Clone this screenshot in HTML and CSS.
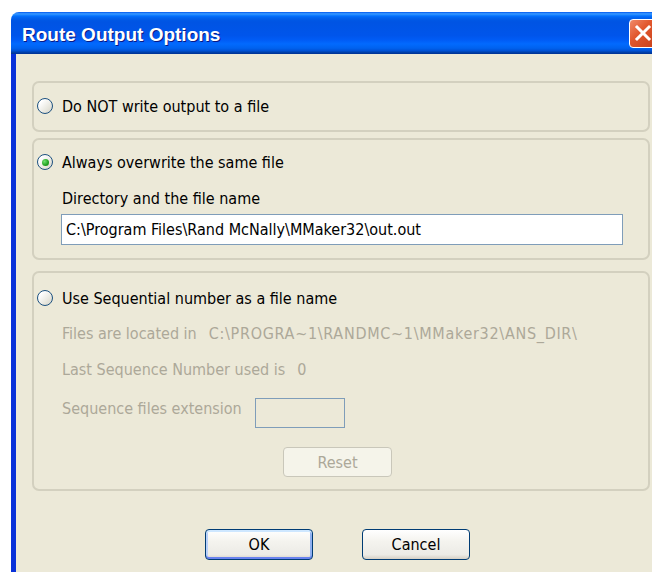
FILE: index.html
```html
<!DOCTYPE html>
<html lang="en">
<head>
<meta charset="utf-8">
<title>Route Output Options</title>
<link rel="stylesheet" href="styles.css">
</head>
<body>
<div class="window">
  <div class="titlebar">
    <span class="title">Route Output Options</span>
    <span class="close">
      <svg width="18" height="18" viewBox="0 0 18 18">
        <path d="M3 3 L15 15 M15 3 L3 15" stroke="#fff" stroke-width="3" stroke-linecap="square"/>
      </svg>
    </span>
  </div>
  <div class="frame">
    <div class="client">
      <div class="group g1">
        <div class="radio-row"><span class="radio"></span><span>Do NOT write output to a file</span></div>
      </div>

      <div class="group g2">
        <div class="radio-row"><span class="radio checked"></span><span>Always overwrite the same file</span></div>
        <div class="label">Directory and the file name</div>
        <input class="field" type="text" value="C:\Program Files\Rand McNally\MMaker32\out.out" readonly>
      </div>

      <div class="group g3">
        <div class="radio-row"><span class="radio"></span><span>Use Sequential number as a file name</span></div>
        <div class="sub"><span>Files are located in</span><span class="path">C:\PROGRA~1\RANDMC~1\MMaker32\ANS_DIR\</span></div>
        <div class="sub"><span>Last Sequence Number used is</span><span>0</span></div>
        <div class="sub ext-row"><span class="ext-label">Sequence files extension</span><input class="ext" type="text" disabled></div>
        <button class="btn reset" type="button" disabled>Reset</button>
      </div>

      <div class="actions">
        <button class="btn default" type="button">OK</button>
        <button class="btn" type="button">Cancel</button>
      </div>
    </div>
  </div>
</div>
</body>
</html>
```

FILE: styles.css
```css
body {
  margin: 0;
  width: 652px;
  height: 572px;
  overflow: hidden;
  background: #ffffff;
  font-family: "DejaVu Sans Condensed", "DejaVu Sans", sans-serif;
  font-stretch: condensed;
  font-size: 16px;
  color: #000000;
}

.window {
  margin: 12px 0 0 11px;
  width: 660px;
}

/* Luna-style caption bar */
.titlebar {
  height: 42px;
  display: flex;
  align-items: center;
  padding-left: 11px;
  border-radius: 8px 8px 0 0;
  background: linear-gradient(to bottom,
    #0058ee 0%, #3593ff 4%, #288eff 6%, #127dff 8%, #036ffc 10%,
    #0262ee 14%, #0057e5 20%, #0054e3 24%, #0055eb 56%, #005bf5 66%,
    #026afe 76%, #0062ef 86%, #0052d6 92%, #0040ab 96%, #003092 100%);
}

.title {
  font-family: "Liberation Sans", Arial, sans-serif;
  font-weight: bold;
  font-size: 19px;
  color: #ffffff;
  text-shadow: 1px 1px 0 #0a1883;
  padding-top: 3px;
}

.close {
  margin-left: auto;
  margin-right: 14px;
  width: 28px;
  height: 29px;
  box-sizing: border-box;
  border: 1px solid #ffffff;
  border-radius: 4px;
  background: linear-gradient(135deg, #f08a6a 0%, #e2582f 40%, #c8401a 100%);
  display: flex;
  align-items: center;
  justify-content: center;
}

.frame {
  padding-left: 5px;
  background: linear-gradient(to right, #0831d9 0%, #1a64ee 40%, #0a55e5 100%);
}

.client {
  background: #ece9d8;
  padding: 27px 21px 40px 16px;
}

/* Group frames */
.group {
  width: 618px;
  box-sizing: border-box;
  border: 2px solid #d3d0bf;
  border-radius: 7px;
  padding-left: 3px;
}

.g1 {
  padding-top: 13px;
  padding-bottom: 14px;
}

.g2 {
  margin-top: 6px;
  padding-top: 12px;
  padding-bottom: 13px;
}

.g3 {
  margin-top: 11px;
  padding-top: 15px;
  padding-bottom: 12px;
}

.radio-row {
  height: 20px;
  display: flex;
  align-items: center;
  gap: 9px;
}

.radio {
  width: 16px;
  height: 16px;
  box-sizing: border-box;
  border: 1px solid #1c5180;
  border-radius: 50%;
  background: linear-gradient(135deg, #ffffff 20%, #e6e5dc 70%, #d2d1c8 100%);
  display: flex;
  align-items: center;
  justify-content: center;
}

.radio.checked::after {
  content: "";
  width: 7px;
  height: 7px;
  border-radius: 50%;
  background: radial-gradient(circle at 35% 35%, #6fe06f 0%, #21a121 60%, #128012 100%);
}

.label {
  margin-top: 17px;
  height: 20px;
  line-height: 20px;
  padding-left: 25px;
}

.field {
  display: block;
  margin: 5px 0 0 24px;
  width: 562px;
  height: 31px;
  box-sizing: border-box;
  border: 1px solid #7f9db9;
  background: #ffffff;
  padding: 0 0 0 4px;
  font: inherit;
  color: #000000;
  outline: none;
}

.sub {
  margin-top: 16px;
  height: 20px;
  line-height: 20px;
  padding-left: 25px;
  display: flex;
  align-items: center;
  gap: 12px;
  color: #aca899;
}

.path {
  letter-spacing: 0.7px;
}

.ext-row {
  margin-top: 18px;
  height: 30px;
  gap: 13px;
}

.ext-label {
  padding-bottom: 8px;
}

.ext {
  width: 90px;
  height: 30px;
  box-sizing: border-box;
  border: 1px solid #7f9db9;
  background: #ece9d8;
  padding: 0;
  font: inherit;
}

/* Push buttons */
.btn {
  display: block;
  width: 108px;
  height: 31px;
  box-sizing: border-box;
  border: 1px solid #003c74;
  border-radius: 4px;
  background: linear-gradient(to bottom, #ffffff 0%, #f4f3ee 40%, #ecebe6 85%, #d6d0c5 100%);
  font: inherit;
  color: #000000;
  padding: 0;
}

.btn.default {
  box-shadow: inset 0 2px 0 #cee7ff, inset 0 -2px 0 #6982ee, inset 2px 0 0 #b9d1fa, inset -2px 0 0 #8fb0f0;
}

.reset {
  margin: 19px 0 0 246px;
  width: 109px;
  height: 30px;
  border-color: #c9c7ba;
  background: #f5f4ea;
  color: #aca899;
}

.actions {
  margin-top: 38px;
  padding-left: 173px;
  display: flex;
  gap: 49px;
}
```
